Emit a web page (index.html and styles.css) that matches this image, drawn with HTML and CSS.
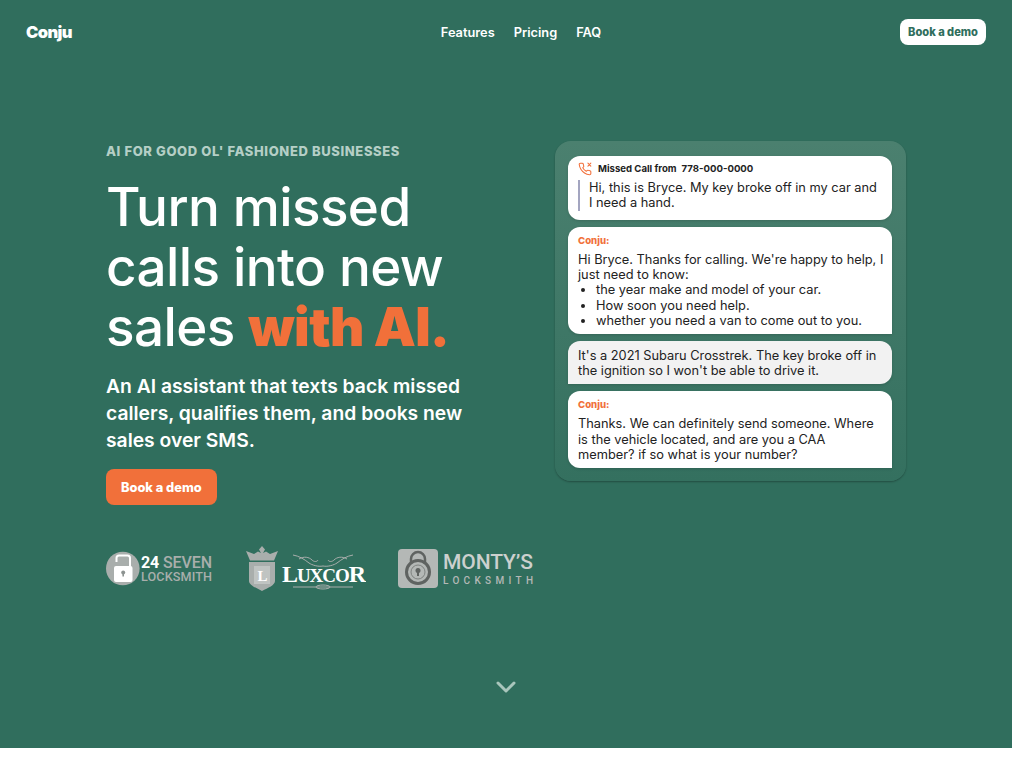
FILE: index.html
```html
<!DOCTYPE html>
<html lang="en">
<head>
    <meta charset="UTF-8">
    <meta name="viewport" content="width=device-width, initial-scale=1.0">
    <title>Conju</title>
    <link rel="stylesheet" href="styles.css">
</head>
<body>
    <section class="hero">
        <nav class="nav">
            <a class="logo" href="#">Conju</a>
            <div class="nav-links">
                <a href="#">Features</a>
                <a href="#">Pricing</a>
                <a href="#">FAQ</a>
            </div>
            <a class="nav-button" href="#">Book a demo</a>
        </nav>

        <div class="hero-main">
            <div class="hero-copy">
                <div class="eyebrow">AI FOR GOOD OL' FASHIONED BUSINESSES</div>
                <h1 class="title">Turn missed calls into new sales <span class="accent">with AI.</span></h1>
                <p class="lead">An AI assistant that texts back missed callers, qualifies them, and books new sales over SMS.</p>
                <a class="cta" href="#">Book a demo</a>

                <div class="logos">
                    <svg class="brand" width="108" height="38" viewBox="0 0 108 38">
                        <circle cx="16.800" cy="18.500" r="16.800" fill="#a9aeac"/>
                        <path d="M10.500 12V8a2.500 2.500 0 0 1 2.500-2.500h8.500A2.500 2.500 0 0 1 24 8v9" fill="none" stroke="#fff" stroke-width="2"/>
                        <rect x="8" y="16" width="18.500" height="16" rx="2" fill="#fff"/>
                        <circle cx="17.200" cy="22.500" r="2" fill="#8d9391"/>
                        <rect x="16.400" y="22.500" width="1.600" height="4" fill="#8d9391"/>
                        <text x="35" y="18" class="seven-top" textLength="71"><tspan class="seven-num">24</tspan> SEVEN</text>
                        <text x="35" y="31" class="seven-bottom" textLength="71">LOCKSMITH</text>
                    </svg>
                    <svg class="brand" width="120" height="46" viewBox="0 0 120 46">
                        <path d="M0 5l8 3 4-2.500 3 1.500-2-3.500L16 0l3 3.500-2 3.500 3-1.500L24 8l8-3-4 9.500H4z" fill="#a9aeac"/>
                        <path d="M3 16h26v19c0 4-7 7-13 10C10 42 3 39 3 35z" fill="#a9aeac"/>
                        <rect x="8" y="20" width="16" height="18" fill="#c0c4c2"/>
                        <text x="16.500" y="35" class="luxcor-badge">L</text>
                        <text x="36" y="36" class="luxcor-name" textLength="84">L<tspan class="luxcor-small">UXCO</tspan>R</text>
                        <path d="M47 9c6 1 11 4 16 8 3 2 9 4 14 3M107 9c-6 1-11 4-16 8-3 2-9 4-14 3M53 13c5-3 10-2 13 1 2 2 5 2 6 0M101 13c-5-3-10-2-13 1-2 2-5 2-6 0" fill="none" stroke="#a9aeac" stroke-width="1"/>
                        <path d="M47 41h60" stroke="#a9aeac" stroke-width="1"/>
                        <ellipse cx="77" cy="41" rx="7" ry="2" fill="none" stroke="#a9aeac" stroke-width="1"/>
                    </svg>
                    <svg class="brand" width="136" height="40" viewBox="0 0 136 40">
                        <rect x="0" y="0" width="40" height="39" rx="4" fill="#b4b8b6"/>
                        <path d="M13 14v-4a7 7 0 0 1 14 0v4" fill="none" stroke="#5f6361" stroke-width="2.500"/>
                        <circle cx="20" cy="23" r="11.500" fill="#b4b8b6" stroke="#5f6361" stroke-width="3"/>
                        <circle cx="20" cy="23" r="7" fill="none" stroke="#7e8280" stroke-width="1"/>
                        <circle cx="20" cy="21.500" r="2.500" fill="#5f6361"/>
                        <rect x="19" y="22" width="2" height="5" fill="#5f6361"/>
                        <text x="45" y="20" class="monty-top" textLength="90">MONTY’S</text>
                        <text x="45" y="35" class="monty-bottom" textLength="90">LOCKSMITH</text>
                    </svg>
                </div>
            </div>

            <div class="chat">
                <div class="bubble">
                    <div class="missed">
                        <svg class="missed-icon" width="14" height="14" viewBox="0 0 24 24" fill="none" stroke="#f26f3a" stroke-width="1.800" stroke-linecap="round" stroke-linejoin="round">
                            <path d="M22 16.900v3a2 2 0 0 1-2.200 2 19.800 19.800 0 0 1-8.600-3.100 19.500 19.500 0 0 1-6-6A19.800 19.800 0 0 1 2.100 4.200 2 2 0 0 1 4.100 2h3a2 2 0 0 1 2 1.700c.1 1 .4 1.900.7 2.800a2 2 0 0 1-.5 2.100L8.100 9.900a16 16 0 0 0 6 6l1.300-1.300a2 2 0 0 1 2.100-.4c.9.300 1.800.6 2.800.7a2 2 0 0 1 1.700 2z"/>
                            <path d="M22 2l-5 5M17 2l5 5"/>
                        </svg>
                        <span>Missed Call from</span>
                        <span class="missed-number">778-000-0000</span>
                    </div>
                    <p class="quote">Hi, this is Bryce. My key broke off in my car and I need a hand.</p>
                </div>

                <div class="bubble bubble-ai">
                    <div class="sender">Conju:</div>
                    <p>Hi Bryce. Thanks for calling. We're happy to help, I just need to know:</p>
                    <ul>
                        <li>the year make and model of your car.</li>
                        <li>How soon you need help.</li>
                        <li>whether you need a van to come out to you.</li>
                    </ul>
                </div>

                <div class="bubble bubble-user">
                    <p>It's a 2021 Subaru Crosstrek. The key broke off in the ignition so I won't be able to drive it.</p>
                </div>

                <div class="bubble bubble-ai">
                    <div class="sender">Conju:</div>
                    <p>Thanks. We can definitely send someone. Where is the vehicle located, and are you a CAA member? if so what is your number?</p>
                </div>
            </div>
        </div>

        <svg class="scroll-down" width="20" height="12" viewBox="0 0 20 12" fill="none" stroke="#a9c6bc" stroke-width="3" stroke-linecap="round" stroke-linejoin="round">
            <path d="M2 2l8 8 8-8"/>
        </svg>
    </section>
</body>
</html>
```

FILE: styles.css
```css
body {
    margin: 0;
    padding: 0;
    background-color: #fff;
    font-family: Inter, "Liberation Sans", sans-serif;
}

a {
    text-decoration: none;
}

.hero {
    display: flex;
    flex-direction: column;
    width: 1012px;
    height: 748px;
    box-sizing: border-box;
    background-color: #306e5d;
    color: #fff;
}

.nav {
    display: grid;
    grid-template-columns: 1fr auto 1fr;
    align-items: center;
    padding: 19px 26px 0;
}

.logo {
    color: #fff;
    font-size: 16.500px;
    font-weight: 900;
    letter-spacing: -0.6px;
}

.nav-links {
    display: flex;
    gap: 19px;
    margin-left: 30px;
}

.nav-links a {
    color: #fff;
    font-size: 12.800px;
    font-weight: 600;
}

.nav-button {
    justify-self: end;
    padding: 6px 8px;
    background-color: #fff;
    border-radius: 8px;
    color: #306e5d;
    font-size: 11.100px;
    font-weight: 800;
    line-height: 14px;
}

.hero-main {
    display: flex;
    justify-content: space-between;
    align-items: flex-start;
    padding: 96px 106px 0;
}

.hero-copy {
    width: 440px;
}

.eyebrow {
    color: #b5cfc6;
    font-size: 13px;
    font-weight: 800;
    letter-spacing: 0.62px;
    line-height: 20px;
}

.title {
    max-width: 400px;
    margin: 16px 0 0;
    font-size: 53px;
    font-weight: 500;
    letter-spacing: -0.6px;
    line-height: 60px;
}

.accent {
    color: #f1703a;
    font-weight: 900;
}

.lead {
    max-width: 370px;
    margin: 16px 0 0;
    font-size: 19.300px;
    font-weight: 600;
    line-height: 27px;
}

.cta {
    display: inline-block;
    margin-top: 15px;
    padding: 10.500px 15px;
    background-color: #f1703a;
    border-radius: 8px;
    color: #fff;
    font-size: 12.800px;
    font-weight: 800;
    line-height: 15px;
}

.logos {
    display: flex;
    align-items: center;
    gap: 32px;
    margin-top: 41px;
}

.seven-top {
    fill: #a9aeac;
    font-family: Roboto, sans-serif;
    font-size: 16px;
    font-weight: 500;
}

.seven-num {
    fill: #fff;
    font-weight: 700;
}

.seven-bottom {
    fill: #a9aeac;
    font-family: Roboto, sans-serif;
    font-size: 12.600px;
    font-weight: 500;
}

.luxcor-badge {
    fill: #fff;
    font-family: "Liberation Serif", serif;
    font-size: 15px;
    font-weight: 700;
    text-anchor: middle;
}

.luxcor-name {
    fill: #fff;
    font-family: "Liberation Serif", serif;
    font-size: 24px;
    font-weight: 700;
}

.luxcor-small {
    font-size: 19px;
}

.monty-top {
    fill: #ccd0ce;
    font-family: Roboto, sans-serif;
    font-size: 21px;
    font-weight: 500;
}

.monty-bottom {
    fill: #b4b8b6;
    font-family: Roboto, sans-serif;
    font-size: 10px;
    font-weight: 500;
}

.chat {
    display: flex;
    flex-direction: column;
    gap: 7px;
    width: 351px;
    box-sizing: border-box;
    padding: 15px 14px 13px 13px;
    background: linear-gradient(#4b806f, #34705f);
    border-radius: 16px;
    box-shadow: 0 1px 2px rgba(0, 0, 0, 0.3);
}

.bubble {
    padding: 7px 7px 6px 10px;
    background-color: #fff;
    border-radius: 12px;
    box-shadow: 0 1px 3px rgba(0, 0, 0, 0.15);
    color: #222;
    font-size: 12.800px;
    line-height: 15.360px;
}

.bubble p {
    margin: 0;
}

.bubble ul {
    margin: 0 0 -1px;
    padding-left: 18px;
}

.bubble-ai {
    border-bottom-right-radius: 0;
}

.bubble-user {
    background-color: #f2f2f2;
    border-bottom-left-radius: 0;
}

.sender {
    margin-bottom: 4px;
    color: #f1703a;
    font-size: 9.600px;
    font-weight: 800;
    line-height: 14px;
}

.missed {
    display: flex;
    align-items: center;
    gap: 5px;
    margin-top: -1px;
    color: #222;
    font-size: 9.600px;
    font-weight: 700;
    line-height: 12px;
}

.missed-icon {
    margin-right: 1px;
}

.bubble .quote {
    margin: 4px 8px 3px 0;
    padding-left: 9px;
    border-left: 2px solid #a3a5c0;
}

.scroll-down {
    align-self: center;
    margin-top: auto;
    margin-bottom: 55px;
}
```
